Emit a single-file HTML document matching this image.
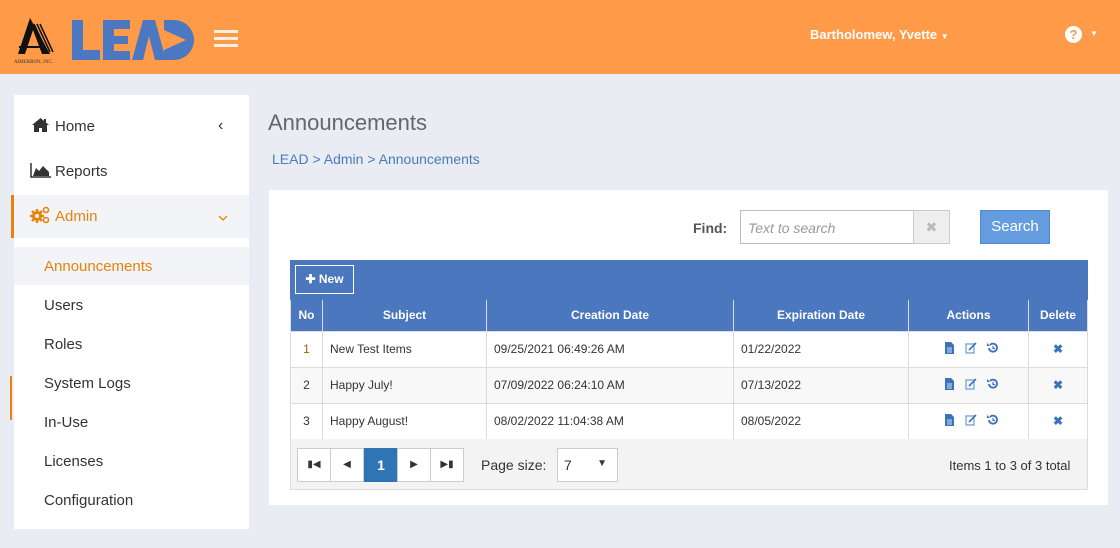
<!DOCTYPE html>
<html><head><style>
*{box-sizing:border-box;margin:0;padding:0}
body{width:1120px;height:548px;background:#e9ecf3;font-family:"Liberation Sans",Arial,sans-serif;position:relative;overflow:hidden}
.hdr{position:absolute;left:0;top:0;width:1120px;height:74px;background:#ff9a48}
.abs{position:absolute}
.side{position:absolute;left:14px;top:95px;width:235px;height:434px;background:#fff}
.side .it{position:absolute;left:0;width:235px;font-size:15px;color:#333}
.sub{position:absolute;left:30px;font-size:15px;color:#333}
.main{position:absolute;left:269px;top:190px;width:839px;height:315px;background:#fff}
table{border-collapse:collapse;position:absolute;left:290px;top:300px;width:798px;font-size:12px}
th{background:#4a77bd;color:#fff;font-weight:bold;height:31px;border:1px solid #dcdcdc;border-top:none}
td{height:36px;border:1px solid #dcdcdc;color:#333;padding-left:7px}
tr.alt td{background:#f8f8f8}
.pg{position:absolute;top:448px;height:34px;width:34px;border:1px solid #ccc;background:#fff;font-size:10px;text-align:center;line-height:32px;color:#333}
.ac{text-align:center;padding:0}
.dl{text-align:center;padding:0;color:#3b72b8;font-size:12px;font-weight:bold}
</style></head><body>
<div class="hdr">
<svg class="abs" style="left:14px;top:16px" width="50" height="50" viewBox="0 0 50 50"><polygon points="16,2 4,38 11,38 19,14 28,38 36,38" fill="#111"/><path d="M20,8 L33,36 M23,8 L36,36 M26,8 L39,36" stroke="#111" stroke-width="1.5"/><rect x="5" y="30" width="26" height="2" fill="#111"/><text x="0" y="47" font-size="5" fill="#333" font-family="Liberation Serif">AIMERBON, INC.</text></svg>
<svg class="abs" style="left:72px;top:20px" width="122" height="40" viewBox="0 0 122 40">
<path d="M0,0H11V30H28V40H0Z" fill="#4b78c0"/>
<path d="M31,0H58V9H42V16H56V24H42V31H58V40H31Z" fill="#4b78c0"/>
<path d="M71,0H83L94,40H83L77,16L71,40H60Z" fill="#4b78c0"/>
<path d="M92,0H102A20,20 0 0 1 102,40H92Z" fill="#4b78c0"/>
<polygon points="92,10 114,20 92,30" fill="#ff9a48"/>
</svg>
<div class="abs" style="left:214px;top:30px;width:24px;height:3px;background:#fff;box-shadow:0 7px 0 #fff,0 14px 0 #fff;opacity:.85"></div>
<div class="abs" style="left:810px;top:27px;color:#fff;font-weight:bold;font-size:13px">Bartholomew, Yvette <span style="font-size:8px">▼</span></div>
<div class="abs" style="left:1065px;top:26px;width:17px;height:17px;border-radius:50%;background:#fff;color:#ff9a48;font-weight:bold;font-size:13px;text-align:center;line-height:17px">?</div>
<div class="abs" style="left:1090px;top:29px;color:#fff;font-size:8px">▼</div>
</div>
<div class="side">
<svg class="abs" style="left:18px;top:23px" width="17" height="14" viewBox="0 0 17 14"><path d="M8.5,0L0,7H2V14H7V10H10V14H15V7H17Z" fill="#333"/><rect x="12" y="1" width="2" height="4" fill="#333"/></svg>
<div class="it" style="top:23px;left:41px">Home</div>
<div class="abs" style="left:204px;top:22px;font-size:16px;color:#333">‹</div>
<svg class="abs" style="left:16px;top:68px" width="21" height="15" viewBox="0 0 21 15"><path d="M1,0V14H21" stroke="#333" stroke-width="1.5" fill="none"/><path d="M3,13L6,5L9,8L13,3L19,9V13Z" fill="#333"/></svg>
<div class="it" style="top:68px;left:41px">Reports</div>
<div class="abs" style="left:-3px;top:100px;width:238px;height:43px;background:#f2f4f7;border-left:3px solid #e8820c"></div>
<svg class="abs" style="left:16px;top:111px" width="20" height="18" viewBox="0 0 20 18"><circle cx="7" cy="10" r="5" fill="#e8820c"/><circle cx="7" cy="10" r="2" fill="#f2f4f7"/><path d="M7,3V17M0,10H14M2,5L12,15M12,5L2,15" stroke="#e8820c" stroke-width="2.5"/><circle cx="7" cy="10" r="2" fill="#f2f4f7"/><circle cx="16" cy="4" r="2.5" fill="none" stroke="#e8820c" stroke-width="1.6"/><circle cx="16" cy="14" r="2.5" fill="none" stroke="#e8820c" stroke-width="1.6"/></svg>
<div class="it" style="top:113px;left:41px;color:#e8820c">Admin</div>
<svg class="abs" style="left:204px;top:120px" width="10" height="6" viewBox="0 0 10 6"><path d="M1,1L5,5L9,1" stroke="#e8820c" stroke-width="1.3" fill="none"/></svg>
<div class="abs" style="left:0;top:152px;width:235px;height:38px;background:#f2f4f7"></div>
<div class="sub" style="top:163px;color:#e8820c">Announcements</div>
<div class="sub" style="top:202px">Users</div>
<div class="sub" style="top:241px">Roles</div>
<div class="sub" style="top:280px">System Logs</div>
<div class="sub" style="top:319px">In-Use</div>
<div class="sub" style="top:358px">Licenses</div>
<div class="sub" style="top:397px">Configuration</div>
</div>
<div class="abs" style="left:10px;top:376px;width:2px;height:44px;background:#e8820c"></div>
<div class="abs" style="left:268px;top:110px;font-size:22px;color:#666">Announcements</div>
<div class="abs" style="left:272px;top:151px;font-size:14px;color:#4a7bbd">LEAD &gt; Admin &gt; Announcements</div>
<div class="main"></div>
<div class="abs" style="left:693px;top:220px;font-size:14px;font-weight:bold;color:#555">Find:</div>
<div class="abs" style="left:740px;top:210px;width:174px;height:34px;border:1px solid #bbb;font-size:14px;font-style:italic;color:#999;padding:9px 7px">Text to search</div>
<div class="abs" style="left:913px;top:210px;width:37px;height:34px;border:1px solid #ccc;background:#eee;color:#bbb;text-align:center;line-height:32px;font-size:14px">✖</div>
<div class="abs" style="left:980px;top:210px;width:70px;height:34px;background:#659ce0;border:1px solid #4f8ad6;color:#fff;text-align:center;line-height:32px;font-size:15px">Search</div>
<div class="abs" style="left:290px;top:260px;width:798px;height:40px;background:#4a77bd"></div>
<div class="abs" style="left:295px;top:265px;width:59px;height:29px;border:1px solid #fff;color:#fff;font-weight:bold;font-size:12px;line-height:27px;text-align:center">✚ New</div>
<table>
<tr><th style="width:32px">No</th><th style="width:164px">Subject</th><th style="width:247px">Creation Date</th><th style="width:175px">Expiration Date</th><th style="width:120px">Actions</th><th>Delete</th></tr>
<tr><td style="text-align:center;padding:0;color:#a0600a">1</td><td>New Test Items</td><td>09/25/2021 06:49:26 AM</td><td>01/22/2022</td><td class="ac"><svg width="60" height="12" viewBox="0 0 60 12"><g fill="#3b72b8"><path d="M6,0H12L15,3V12H6Z"/></g><path d="M8,6H13M8,8H13M8,10H13" stroke="#fff" stroke-width="0.8"/><rect x="27" y="2" width="8" height="9" fill="none" stroke="#6a9ad0" stroke-width="1.2"/><path d="M30,8L37,1" stroke="#3b72b8" stroke-width="1.6"/><path d="M50,6A4,4 0 1 0 51,3" stroke="#3b72b8" stroke-width="1.8" fill="none"/><path d="M48,1V4H51" fill="#3b72b8"/><path d="M54,4V6.5H56" stroke="#3b72b8" stroke-width="1.2" fill="none"/></svg></td><td class="dl">✖</td></tr>
<tr class="alt"><td style="text-align:center;padding:0">2</td><td>Happy July!</td><td>07/09/2022 06:24:10 AM</td><td>07/13/2022</td><td class="ac"><svg width="60" height="12" viewBox="0 0 60 12"><g fill="#3b72b8"><path d="M6,0H12L15,3V12H6Z"/></g><path d="M8,6H13M8,8H13M8,10H13" stroke="#fff" stroke-width="0.8"/><rect x="27" y="2" width="8" height="9" fill="none" stroke="#6a9ad0" stroke-width="1.2"/><path d="M30,8L37,1" stroke="#3b72b8" stroke-width="1.6"/><path d="M50,6A4,4 0 1 0 51,3" stroke="#3b72b8" stroke-width="1.8" fill="none"/><path d="M48,1V4H51" fill="#3b72b8"/><path d="M54,4V6.5H56" stroke="#3b72b8" stroke-width="1.2" fill="none"/></svg></td><td class="dl">✖</td></tr>
<tr><td style="text-align:center;padding:0">3</td><td>Happy August!</td><td>08/02/2022 11:04:38 AM</td><td>08/05/2022</td><td class="ac"><svg width="60" height="12" viewBox="0 0 60 12"><g fill="#3b72b8"><path d="M6,0H12L15,3V12H6Z"/></g><path d="M8,6H13M8,8H13M8,10H13" stroke="#fff" stroke-width="0.8"/><rect x="27" y="2" width="8" height="9" fill="none" stroke="#6a9ad0" stroke-width="1.2"/><path d="M30,8L37,1" stroke="#3b72b8" stroke-width="1.6"/><path d="M50,6A4,4 0 1 0 51,3" stroke="#3b72b8" stroke-width="1.8" fill="none"/><path d="M48,1V4H51" fill="#3b72b8"/><path d="M54,4V6.5H56" stroke="#3b72b8" stroke-width="1.2" fill="none"/></svg></td><td class="dl">✖</td></tr>
</table>
<div class="abs" style="left:290px;top:439px;width:798px;height:51px;background:#f3f3f3;border:1px solid #ddd;border-top:none"></div>
<div class="pg" style="left:297px">▮◀</div>
<div class="pg" style="left:330px">◀</div>
<div class="pg" style="left:364px;background:#2f74b5;color:#fff;font-size:14px;font-weight:bold;border-color:#2f74b5">1</div>
<div class="pg" style="left:397px">▶</div>
<div class="pg" style="left:430px">▶▮</div>
<div class="abs" style="left:481px;top:457px;font-size:14px;color:#333">Page size:</div>
<div class="abs" style="left:557px;top:448px;width:61px;height:34px;border:1px solid #ccc;background:#fff;font-size:14px;padding:8px 6px;color:#333">7<span style="position:absolute;right:10px;top:9px;font-size:10px">▼</span></div>
<div class="abs" style="left:949px;top:458px;font-size:13px;color:#333">Items 1 to 3 of 3 total</div>
</body></html>
